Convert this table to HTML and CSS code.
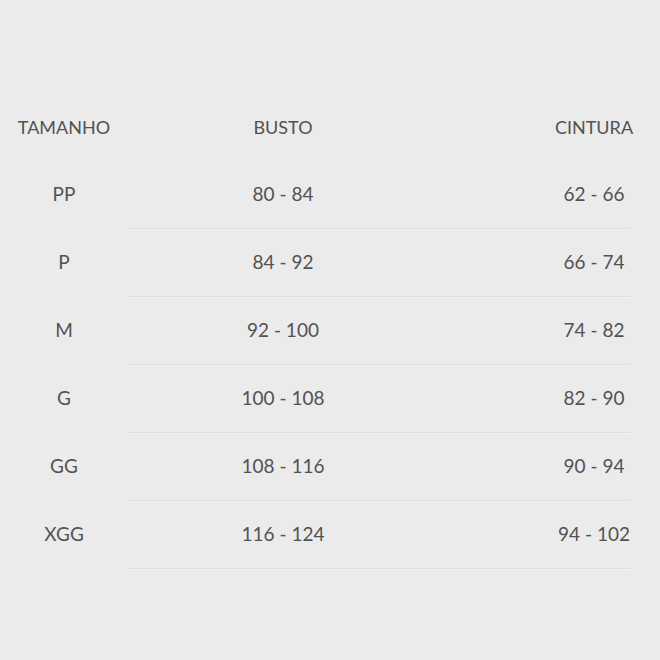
FILE: index.html
```html
<!DOCTYPE html>
<html lang="pt">
<head>
<meta charset="utf-8">
<link rel="stylesheet" href="styles.css">
</head>
<body>
<div class="table">
  <div class="row head">
    <div class="cell c1">TAMANHO</div>
    <div class="cell c2">BUSTO</div>
    <div class="cell c3">CINTURA</div>
  </div>
  <div class="row">
    <div class="cell c1">PP</div>
    <div class="cell c2">80 - 84</div>
    <div class="cell c3">62 - 66</div>
  </div>
  <div class="row">
    <div class="cell c1">P</div>
    <div class="cell c2">84 - 92</div>
    <div class="cell c3">66 - 74</div>
  </div>
  <div class="row">
    <div class="cell c1">M</div>
    <div class="cell c2">92 - 100</div>
    <div class="cell c3">74 - 82</div>
  </div>
  <div class="row">
    <div class="cell c1">G</div>
    <div class="cell c2">100 - 108</div>
    <div class="cell c3">82 - 90</div>
  </div>
  <div class="row">
    <div class="cell c1">GG</div>
    <div class="cell c2">108 - 116</div>
    <div class="cell c3">90 - 94</div>
  </div>
  <div class="row">
    <div class="cell c1">XGG</div>
    <div class="cell c2">116 - 124</div>
    <div class="cell c3">94 - 102</div>
  </div>
</div>
</body>
</html>
```
FILE: styles.css
```css
html, body {
  margin: 0;
  padding: 0;
  background: #ebebeb;
  width: 660px;
  height: 660px;
  overflow: hidden;
}
body {
  font-family: Lato, "Open Sans", sans-serif;
  color: #525252;
}
.table {
  padding-top: 97px;
  display: flex;
  flex-direction: column;
}
.row {
  display: grid;
  grid-template-columns: 128px 310px 191px;
  height: 68px;
  font-size: 19px;
}
.row.head {
  height: 64px;
  font-size: 18px;
}
.row.head .cell {
  padding-bottom: 4px;
}
.cell {
  display: flex;
  align-items: center;
  justify-content: center;
  white-space: nowrap;
  box-sizing: border-box;
  padding-bottom: 3px;
}
.row:not(.head) .c2,
.row:not(.head) .c3 {
  border-bottom: 1px solid #dedede;
  box-shadow: 0 1px 0 #f3f3f3;
}
.c3 {
  padding-left: 121px;
}
```
